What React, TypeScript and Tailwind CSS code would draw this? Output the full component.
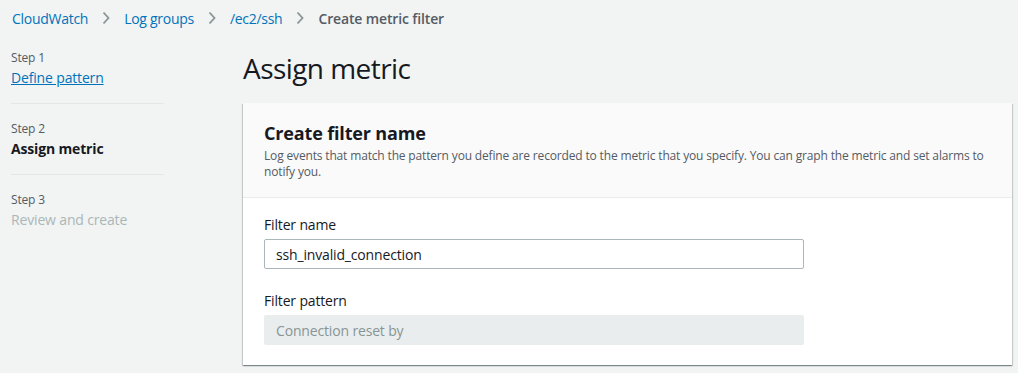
import React from "react";

const Chevron = () => (
  <svg width="10" height="14" viewBox="0 0 10 14" className="mx-[13px] shrink-0">
    <path d="M2.5 1.5 L7.5 7 L2.5 12.5" fill="none" stroke="#879596" strokeWidth="1.8" />
  </svg>
);

export default function App() {
  return (
    <div
      className="w-[1018px] h-[373px] bg-[#f2f3f3] overflow-hidden text-[#16191f] tracking-[-0.01em]"
      style={{ fontFamily: '"Open Sans", "Noto Sans", sans-serif' }}
    >
      <nav className="flex items-center h-[36px] pl-[12px] text-[14px] tracking-[-0.02em]">
        <a className="text-[#0073bb]">CloudWatch</a>
        <Chevron />
        <a className="text-[#0073bb]">Log groups</a>
        <Chevron />
        <a className="text-[#0073bb]">/ec2/ssh</a>
        <Chevron />
        <span className="text-[#545b64] font-semibold tracking-[-0.01em]">Create metric filter</span>
      </nav>
      <div className="flex">
        <aside className="w-[153px] ml-[11px] shrink-0">
          <div className="pt-[13px] pb-[14px] border-b border-[#e5e7e7]">
            <div className="text-[12px] leading-[18px] text-[#545b64]">Step 1</div>
            <a className="block text-[14px] leading-[22px] text-[#0073bb] underline">Define pattern</a>
          </div>
          <div className="pt-[16px] pb-[14px] border-b border-[#e5e7e7]">
            <div className="text-[12px] leading-[18px] text-[#545b64]">Step 2</div>
            <div className="text-[14px] leading-[22px] font-bold text-[#16191f]">Assign metric</div>
          </div>
          <div className="pt-[16px]">
            <div className="text-[12px] leading-[18px] text-[#545b64]">Step 3</div>
            <div className="text-[14px] leading-[22px] text-[#aab7b8]">Review and create</div>
          </div>
        </aside>
        <main className="ml-[79px] flex-1 pr-[6px]">
          <h1 className="text-[28px] leading-[36px] pt-[14px] text-[#16191f] tracking-[-0.02em]">Assign metric</h1>
          <section className="mt-[17px] bg-white shadow-[0_1px_1px_0_rgba(0,28,36,0.3),1px_1px_1px_0_rgba(0,28,36,0.15),-1px_1px_1px_0_rgba(0,28,36,0.15)]">
            <header className="bg-[#fafafa] border-b border-[#eaeded] px-[21px] pt-[18px] pb-[17px]">
              <h2 className="text-[18px] leading-[24px] font-bold text-[#16191f]">Create filter name</h2>
              <p className="text-[12px] leading-[16px] text-[#545b64] mt-[3px]">
                Log events that match the pattern you define are recorded to the metric that you specify. You can graph the metric and set alarms to notify you.
              </p>
            </header>
            <div className="px-[21px] pt-[16px] pb-[20px]">
              <label className="block text-[14px] leading-[22px] text-[#16191f]">Filter name</label>
              <div className="mt-[3px] w-[540px] h-[30px] border border-[#aab7b8] rounded-[2px] flex items-center px-[11px] text-[14px] text-[#16191f]">
                ssh_invalid_connection
              </div>
              <label className="block mt-[21px] text-[14px] leading-[22px] text-[#16191f]">Filter pattern</label>
              <div className="mt-[3px] w-[540px] h-[30px] bg-[#eaeded] rounded-[2px] flex items-center px-[12px] text-[14px] text-[#879596]">
                Connection reset by
              </div>
            </div>
          </section>
        </main>
      </div>
    </div>
  );
}
